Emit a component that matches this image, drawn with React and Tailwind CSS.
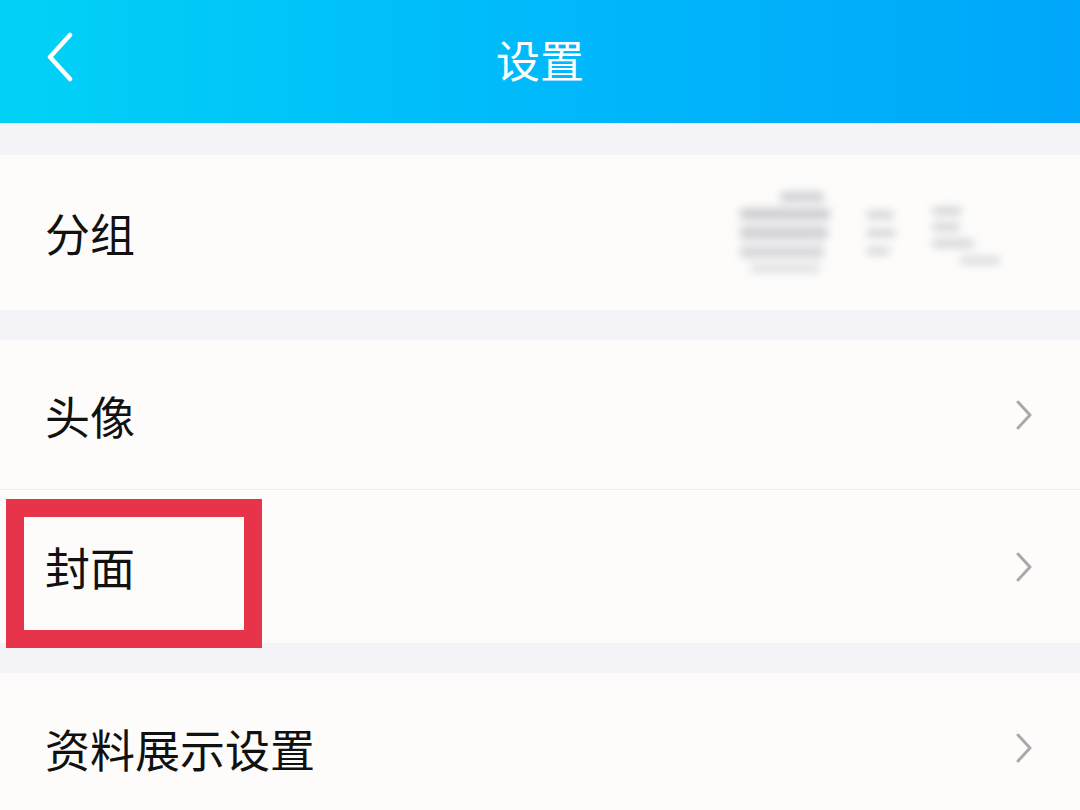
import React from 'react'

const font = { fontFamily: '"Noto Sans CJK SC", "Noto Sans", sans-serif' }

function Chevron() {
  return (
    <svg width="20" height="32" viewBox="0 0 20 32" fill="none" className="shrink-0">
      <path d="M4 3 L16 16 L4 29" stroke="#a9a9ab" strokeWidth="3" strokeLinecap="round" strokeLinejoin="round" />
    </svg>
  )
}

function Row({ label, children, arrow = true, divider = false, h = 'h-[150px]' }) {
  return (
    <div className={`relative flex items-center justify-between pl-[45px] pr-[46px] bg-[#fdfcfb] ${h}`}>
      <span className="text-[45px] leading-none text-[#111]">{label}</span>
      {children}
      {arrow ? <Chevron /> : null}
      {divider ? <div className="absolute left-0 right-0 bottom-0 h-px bg-[#ececef]" /> : null}
    </div>
  )
}

// blurred-out group name, just smudges
function Smudge() {
  return (
    <div className="flex items-center gap-[36px] blur-[4px] pr-[34px] opacity-80">
      <div className="flex flex-col gap-[6px]">
        <div className="w-[44px] h-[10px] rounded bg-[#c4c4ca] ml-[40px]" />
        <div className="w-[90px] h-[12px] rounded bg-[#c2c2c8]" />
        <div className="w-[88px] h-[14px] rounded bg-[#c8c8ce]" />
        <div className="w-[84px] h-[12px] rounded bg-[#cdcdd2]" />
        <div className="w-[70px] h-[9px] rounded bg-[#dadade] ml-[10px]" />
      </div>
      <div className="flex flex-col gap-[10px]">
        <div className="w-[28px] h-[8px] rounded bg-[#c8c8cc]" />
        <div className="w-[30px] h-[8px] rounded bg-[#c8c8cc]" />
        <div className="w-[24px] h-[8px] rounded bg-[#cdcdd1]" />
      </div>
      <div className="flex flex-col gap-[8px] mt-[6px]">
        <div className="w-[30px] h-[8px] rounded bg-[#c8c8cc]" />
        <div className="w-[28px] h-[8px] rounded bg-[#c8c8cc]" />
        <div className="w-[42px] h-[9px] rounded bg-[#cdcdd1]" />
        <div className="w-[40px] h-[9px] rounded bg-[#d6d6da] ml-[28px]" />
      </div>
    </div>
  )
}

export default function App() {
  return (
    <div className="relative w-[1080px] h-[810px] overflow-hidden bg-[#f4f4f8]" style={font}>
      <div className="relative h-[123px] flex items-center justify-center bg-gradient-to-r from-[#03d2f6] via-[#00b9fb] to-[#00a7fa]">
        <svg width="30" height="50" viewBox="0 0 30 50" className="absolute left-[45px] top-[32px]" fill="none">
          <path d="M25 3 L5 25 L25 47" stroke="white" strokeWidth="4.5" strokeLinecap="round" strokeLinejoin="round" />
        </svg>
        <span className="text-[44px] leading-none text-white mt-[-6px]">设置</span>
      </div>

      <div className="h-[32px]" />
      <Row label="分组" arrow={false} h="h-[155px]">
        <Smudge />
      </Row>
      <div className="h-[30px]" />
      <Row label="头像" divider h="h-[150px]" />
      <Row label="封面" h="h-[153px]" />
      <div className="h-[30px]" />
      <Row label="资料展示设置" h="h-[150px]" />

      <div className="absolute left-[6px] top-[499px] w-[256px] h-[149px] border-[18px] border-[#e8344b]" />
    </div>
  )
}
